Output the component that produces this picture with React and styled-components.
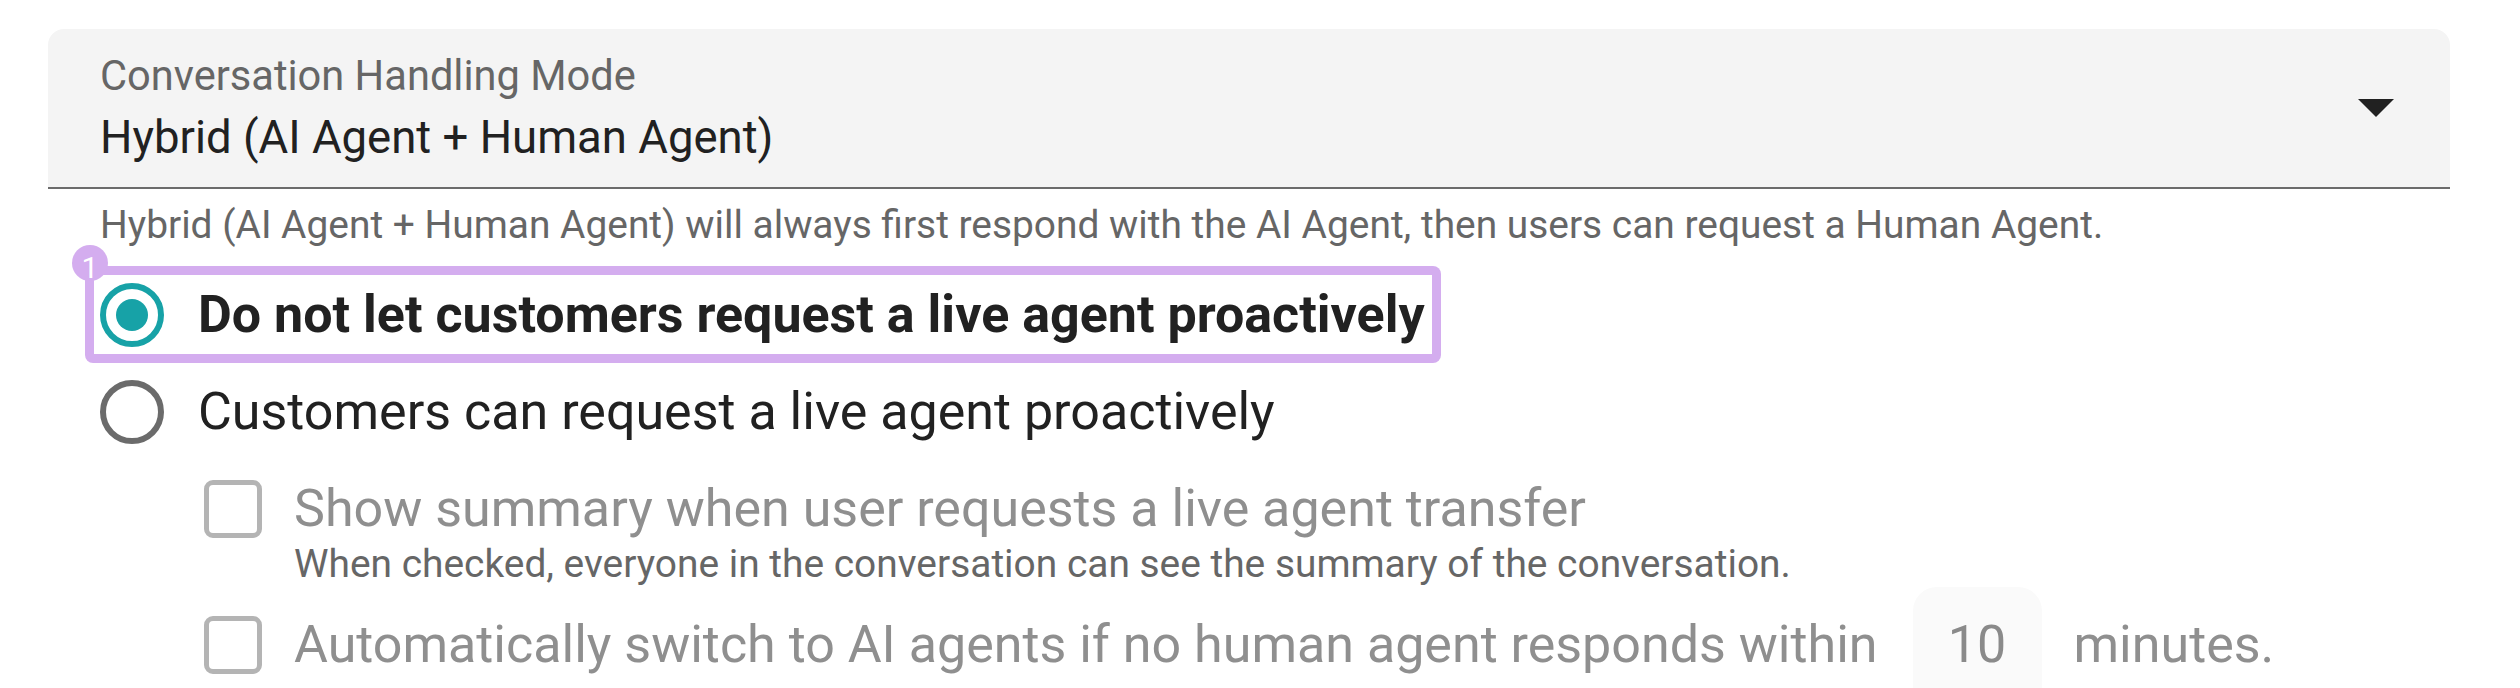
import React, { useState } from 'react';
import styled, { createGlobalStyle } from 'styled-components';

const GlobalStyle = createGlobalStyle`
  html, body {
    margin: 0;
    padding: 0;
    background: #ffffff;
  }
  body {
    font-family: Roboto, "Noto Sans", "Liberation Sans", sans-serif;
    color: #212121;
  }
`

const Page = styled.div`
  padding: 29px 70px 0 48px;
  overflow: hidden;
  height: 659px;
`

const Select = styled.div`
  position: relative;
  height: 160px;
  box-sizing: border-box;
  padding: 23px 52px 0;
  background: #f4f4f4;
  border-radius: 16px 16px 0 0;
  border-bottom: 2px solid #6b6b6b;
`

const FieldLabel = styled.div`
  font-size: 41.6px;
  line-height: 48px;
  color: #666666;
`

const FieldValue = styled.div`
  margin-top: 11px;
  font-size: 45.5px;
  line-height: 54px;
  color: #212121;
`

// dropdown caret, drawn as a css triangle
const Caret = styled.span`
  position: absolute;
  right: 56px;
  top: 50%;
  margin-top: -9px;
  width: 0;
  height: 0;
  border-left: 18px solid transparent;
  border-right: 18px solid transparent;
  border-top: 18px solid #212121;
`

const Helper = styled.div`
  margin-top: ${(props) => props.top || 0}px;
  padding-left: ${(props) => props.indent || 0}px;
  font-size: 38.9px;
  line-height: 46px;
  color: #666666;
`

const RadioGroup = styled.div`
  margin-top: 18px;
  display: flex;
  flex-direction: column;
  align-items: flex-start;
`

const RadioRow = styled.label`
  position: relative;
  display: flex;
  align-items: center;
  gap: 34px;
  height: 97px;
  box-sizing: border-box;
  margin-left: 37px;
  padding: 0 16px 0 15px;
  border-radius: 8px;
  font-size: 52px;
  font-weight: ${(props) => (props.checked ? 700 : 400)};
  color: #212121;
  cursor: pointer;
  box-shadow: ${(props) => (props.highlight ? 'inset 0 0 0 9px #d4adef' : 'none')};
`

const RadioMark = styled.span`
  flex: none;
  width: 64px;
  height: 64px;
  box-sizing: border-box;
  border-radius: 50%;
  border: 6px solid ${(props) => (props.checked ? '#17a2a7' : '#6b6b6b')};
  display: flex;
  align-items: center;
  justify-content: center;

  &::after {
    content: '';
    width: 32px;
    height: 32px;
    border-radius: 50%;
    background: #17a2a7;
    display: ${(props) => (props.checked ? 'block' : 'none')};
  }
`

const Badge = styled.span`
  position: absolute;
  left: -13px;
  top: -21px;
  width: 36px;
  height: 36px;
  border-radius: 50%;
  background: #d4adef;
  color: #ffffff;
  font-size: 30px;
  font-weight: 400;
  line-height: 46px;
  text-align: center;
`

const Options = styled.div`
  margin-top: 19px;
  padding-left: 156px;
  display: flex;
  flex-direction: column;
`

const CheckRow = styled.div`
  display: flex;
  align-items: center;
  gap: 32px;
  min-height: 60px;
  font-size: 52px;
  line-height: 60px;
  color: #8f8f8f;
`

const CheckBox = styled.span`
  flex: none;
  width: 58px;
  height: 58px;
  box-sizing: border-box;
  border: 5px solid #b4b4b4;
  border-radius: 9px;
`

const CheckText = styled.div`
  display: flex;
  align-items: center;
`

const MinutesInput = styled.div`
  width: 129px;
  height: 116px;
  margin: 0 32px 0 35px;
  border-radius: 24px 24px 0 0;
  background: #fafafa;
  color: #8a8a8a;
  display: flex;
  align-items: center;
  justify-content: center;
`

const options = [
  { id: 'none', label: 'Do not let customers request a live agent proactively' },
  { id: 'proactive', label: 'Customers can request a live agent proactively' },
]

const App = () => {
  const [mode, setMode] = useState('none')

  return (
    <>
      <GlobalStyle />
      <Page>
        <Select>
          <FieldLabel>Conversation Handling Mode</FieldLabel>
          <FieldValue>Hybrid (AI Agent + Human Agent)</FieldValue>
          <Caret />
        </Select>
        <Helper top={13} indent={52}>
          Hybrid (AI Agent + Human Agent) will always first respond with the AI Agent, then users can request a Human Agent.
        </Helper>

        <RadioGroup>
          {options.map((opt, i) => (
            <RadioRow
              key={opt.id}
              checked={mode === opt.id}
              highlight={i === 0}
              onClick={() => setMode(opt.id)}
            >
              {i === 0 && <Badge>1</Badge>}
              <RadioMark checked={mode === opt.id} />
              {opt.label}
            </RadioRow>
          ))}
        </RadioGroup>

        <Options>
          <CheckRow>
            <CheckBox />
            Show summary when user requests a live agent transfer
          </CheckRow>
          <Helper top={2} indent={90}>
            When checked, everyone in the conversation can see the summary of the conversation.
          </Helper>
          <CheckRow>
            <CheckBox />
            <CheckText>
              Automatically switch to AI agents if no human agent responds within
              <MinutesInput>10</MinutesInput>
              minutes.
            </CheckText>
          </CheckRow>
        </Options>
      </Page>
    </>
  )
}

export default App
